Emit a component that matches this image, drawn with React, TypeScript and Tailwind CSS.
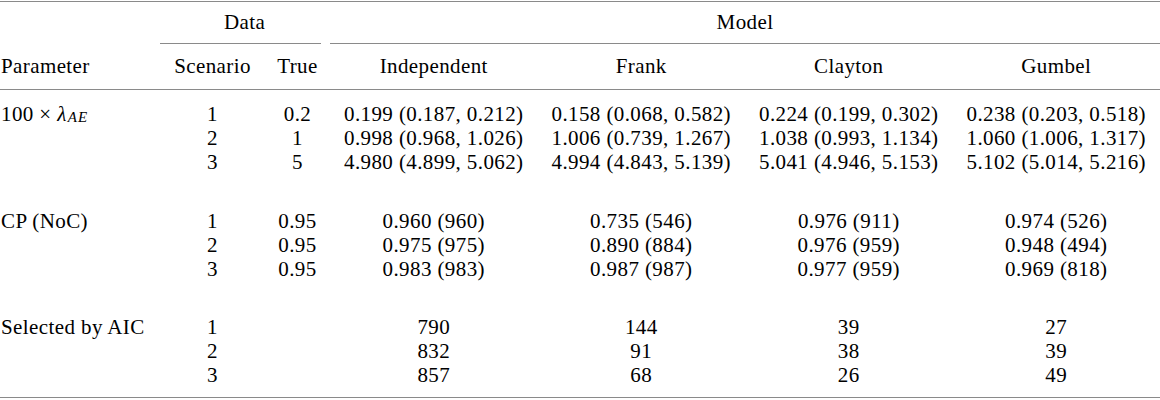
import React from "react";

const COLS = "grid grid-cols-[160px_105px_65px_207.5px_207.5px_207.5px_207.5px]";

const GROUPS: { key: string; label: React.ReactNode; rows: string[][] }[] = [
  {
    key: "lambda",
    label: (
      <span>
        100 × <i>λ</i>
        <sub className="text-[15px] italic tracking-[1px] relative top-[1px] ml-px">AE</sub>
      </span>
    ),
    rows: [
      ["1", "0.2", "0.199 (0.187, 0.212)", "0.158 (0.068, 0.582)", "0.224 (0.199, 0.302)", "0.238 (0.203, 0.518)"],
      ["2", "1", "0.998 (0.968, 1.026)", "1.006 (0.739, 1.267)", "1.038 (0.993, 1.134)", "1.060 (1.006, 1.317)"],
      ["3", "5", "4.980 (4.899, 5.062)", "4.994 (4.843, 5.139)", "5.041 (4.946, 5.153)", "5.102 (5.014, 5.216)"],
    ],
  },
  {
    key: "cp",
    label: "CP (NoC)",
    rows: [
      ["1", "0.95", "0.960 (960)", "0.735 (546)", "0.976 (911)", "0.974 (526)"],
      ["2", "0.95", "0.975 (975)", "0.890 (884)", "0.976 (959)", "0.948 (494)"],
      ["3", "0.95", "0.983 (983)", "0.987 (987)", "0.977 (959)", "0.969 (818)"],
    ],
  },
  {
    key: "aic",
    label: "Selected by AIC",
    rows: [
      ["1", "", "790", "144", "39", "27"],
      ["2", "", "832", "91", "38", "39"],
      ["3", "", "857", "68", "26", "49"],
    ],
  },
];

const MODELS = ["Independent", "Frank", "Clayton", "Gumbel"];

export default function App() {
  return (
    <div className="w-[1160px] h-[400px] bg-white pt-px [font-family:Liberation_Serif,serif] text-[21px] tracking-[0.4px] text-black">
      <div className="h-px bg-[#8a8a8a]" />

      {/* spanner row */}
      <div className={`${COLS} h-[42px]`}>
        <div className="col-start-2 col-span-2 mr-[9px] pl-[8px] border-b border-[#8a8a8a] flex items-center justify-center">Data</div>
        <div className="col-span-4 border-b border-[#8a8a8a] flex items-center justify-center">Model</div>
      </div>

      {/* column headers */}
      <div className={`${COLS} h-[46px] border-b border-[#8a8a8a] items-center`}>
        <div className="pl-px">Parameter</div>
        <div className="text-center">Scenario</div>
        <div className="text-center">True</div>
        {MODELS.map((m) => (
          <div key={m} className="text-center">{m}</div>
        ))}
      </div>

      {/* body */}
      <div className="pt-[12px] pb-[10px] border-b border-[#8a8a8a] flex flex-col">
        {GROUPS.map((g, gi) => (
          <div key={g.key} className={gi === 1 ? "mt-[35px]" : gi === 2 ? "mt-[34px]" : ""}>
            {g.rows.map((r, ri) => (
              <div key={ri} className={`${COLS} h-[24px] leading-[24px] whitespace-nowrap`}>
                <div className="pl-px">{ri === 0 ? g.label : ""}</div>
                {r.map((c, ci) => (
                  <div key={ci} className="text-center">{c}</div>
                ))}
              </div>
            ))}
          </div>
        ))}
      </div>
    </div>
  );
}
